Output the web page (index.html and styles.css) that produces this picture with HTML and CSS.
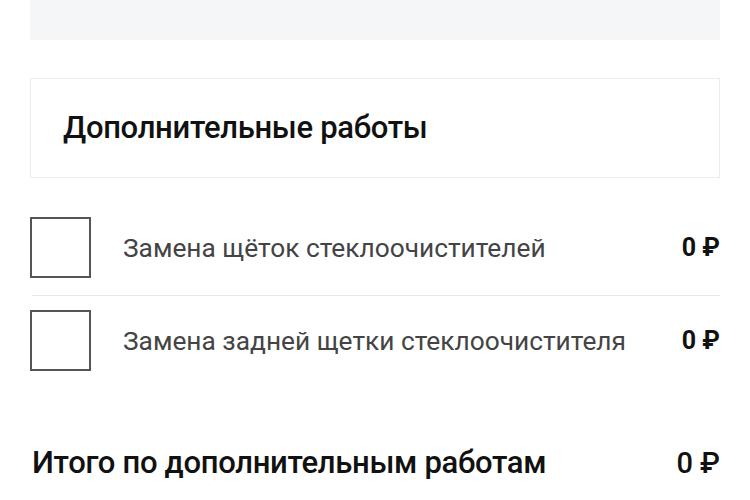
FILE: index.html
```html
<!DOCTYPE html>
<html lang="ru">
<head>
<meta charset="utf-8">
<link rel="stylesheet" href="styles.css">
</head>
<body>
<div class="page">
  <div class="top-bar"></div>
  <div class="section-box">
    <h2 class="section-title">Дополнительные работы</h2>
  </div>
  <div class="rows">
    <div class="row first">
      <span class="checkbox"></span>
      <span class="row-label">Замена щёток стеклоочистителей</span>
      <span class="price">0 ₽</span>
    </div>
    <div class="row second">
      <span class="checkbox"></span>
      <span class="row-label">Замена задней щетки стеклоочистителя</span>
      <span class="price">0 ₽</span>
    </div>
  </div>
  <div class="total">
    <span class="total-label">Итого по дополнительным работам</span>
    <span class="total-price">0 ₽</span>
  </div>
</div>
</body>
</html>
```
FILE: styles.css
```css
* { box-sizing: border-box; }
html, body { margin: 0; padding: 0; background: #fff; }
body { font-family: Roboto, "Noto Sans", sans-serif; color: #111; }
.page { padding: 0 30px; width: 750px; }
.top-bar { height: 40px; background: #f4f6f7; }
.section-box {
  margin-top: 38px;
  height: 100px;
  border: 1px solid #ececec;
  display: flex;
  align-items: center;
  padding-left: 32px;
}
.section-title {
  margin: 0;
  font-size: 31px;
  line-height: 36px;
  font-weight: 500;
  color: #111;
  letter-spacing: -0.3px;
}
.rows { padding-top: 39px; }
.row { display: flex; align-items: center; }
.row.first { padding-bottom: 17px; border-bottom: 1px solid #e8e8e8; margin-left: 2px; }
.row.first .checkbox { margin-left: -2px; }
.row.second { padding-top: 14px; }
.checkbox {
  width: 61px; height: 61px;
  border: 2px solid #555;
  flex: none;
}
.row-label {
  margin-left: 32px;
  font-size: 26.3px;
  line-height: 30px;
  color: #444;
  flex: 1;
}
.price { font-size: 25px; line-height: 30px; font-weight: 700; color: #111; }
.total {
  margin-top: 74px;
  display: flex;
  align-items: center;
  justify-content: space-between;
  line-height: 36px;
}
.total-label { font-size: 31px; font-weight: 500; color: #111; padding-left: 2px; letter-spacing: -0.3px; }
.total-price { font-size: 29px; font-weight: 500; color: #111; }
```
